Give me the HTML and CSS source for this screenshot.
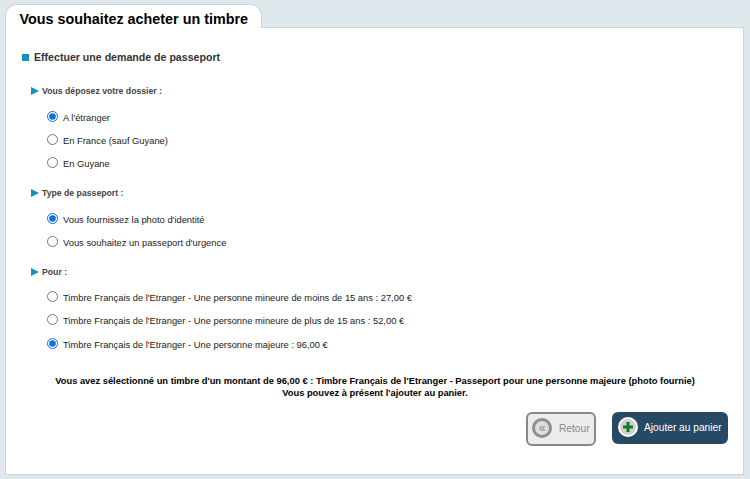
FILE: index.html
```html
<!DOCTYPE html>
<html lang="fr">
<head>
    <meta charset="UTF-8">
    <meta name="viewport" content="width=device-width, initial-scale=1.0">
    <title>Vous souhaitez acheter un timbre</title>
    <link rel="stylesheet" href="styles.css">
</head>
<body>
    <div class="tab">Vous souhaitez acheter un timbre</div>
    <div class="panel">
        <h2 class="section-title"><span class="square"></span>Effectuer une demande de passeport</h2>

        <form>
            <h3 class="group-title"><span class="arrow"></span>Vous déposez votre dossier :</h3>
            <div class="options">
                <label class="option"><input type="radio" name="depot" checked>A l'étranger</label>
                <label class="option"><input type="radio" name="depot">En France (sauf Guyane)</label>
                <label class="option"><input type="radio" name="depot">En Guyane</label>
            </div>

            <h3 class="group-title"><span class="arrow"></span>Type de passeport :</h3>
            <div class="options">
                <label class="option"><input type="radio" name="type" checked>Vous fournissez la photo d'identité</label>
                <label class="option"><input type="radio" name="type">Vous souhaitez un passeport d'urgence</label>
            </div>

            <h3 class="group-title"><span class="arrow"></span>Pour :</h3>
            <div class="options">
                <label class="option"><input type="radio" name="pour">Timbre Français de l'Etranger - Une personne mineure de moins de 15 ans : 27,00 €</label>
                <label class="option"><input type="radio" name="pour">Timbre Français de l'Etranger - Une personne mineure de plus de 15 ans : 52,00 €</label>
                <label class="option"><input type="radio" name="pour" checked>Timbre Français de l'Etranger - Une personne majeure : 96,00 €</label>
            </div>
        </form>

        <p class="summary">Vous avez sélectionné un timbre d'un montant de 96,00 € : Timbre Français de l'Etranger - Passeport pour une personne majeure (photo fournie)<br>Vous pouvez à présent l'ajouter au panier.</p>

        <div class="actions">
            <a class="btn btn-back" href="#"><span class="btn-icon">«</span>Retour</a>
            <a class="btn btn-add" href="#">
                <span class="btn-icon">
                    <svg width="10" height="10" viewBox="0 0 10 10"><path d="M3.5 0h3v3.5H10v3H6.500V10h-3V6.500H0v-3h3.500z" fill="#0f7a1c"/></svg>
                </span>Ajouter au panier</a>
        </div>
    </div>
</body>
</html>
```

FILE: styles.css
```css
* {
    margin: 0;
    padding: 0;
    box-sizing: border-box;
}

body {
    background: #dfe8ed;
    font-family: 'Liberation Sans', Arial, sans-serif;
    color: #000;
    padding: 4px 6px 0 5px;
    height: 479px;
    overflow: hidden;
}

.tab {
    width: 257px;
    height: 24px;
    margin-bottom: -1px;
    position: relative;
    background: #fff;
    border: 1px solid #ccd4d8;
    border-bottom: none;
    border-radius: 12px 12px 0 0;
    padding: 6px 0 0 13.5px;
    font-size: 14.35px;
    line-height: 16px;
    font-weight: bold;
}

.panel {
    height: 448px;
    background: #fff;
    border: 1px solid #ccd4d8;
    padding: 22px 15px 0 16px;
}

.section-title {
    display: flex;
    align-items: center;
    font-size: 10.6px;
    line-height: 14px;
    font-weight: bold;
    color: #333;
    margin-bottom: 21px;
}

.square {
    width: 7px;
    height: 7px;
    background: #1490bd;
    margin-right: 5px;
}

.group-title {
    display: flex;
    align-items: center;
    font-size: 8.7px;
    line-height: 12px;
    font-weight: bold;
    color: #444;
    margin-left: 9px;
}

.arrow {
    width: 0;
    height: 0;
    border-left: 8px solid #1490bd;
    border-top: 4.5px solid transparent;
    border-bottom: 4.5px solid transparent;
    margin-right: 3px;
}

.options {
    margin: 8.9px 0 10.9px 25px;
}

.option {
    display: flex;
    align-items: center;
    height: 23.4px;
    font-size: 9.35px;
    color: #222;
}

.option input {
    width: 11px;
    height: 11px;
    margin: 0 5px 3px 0;
    accent-color: #0f6fe0;
}

.summary {
    margin-top: 18.6px;
    font-size: 9.33px;
    line-height: 12px;
    font-weight: bold;
    text-align: center;
}

.actions {
    display: flex;
    justify-content: flex-end;
    gap: 16px;
    margin-top: 13px;
}

.btn {
    display: flex;
    align-items: center;
    border-radius: 6px;
    text-decoration: none;
    padding-bottom: 2px;
}

.btn-icon {
    display: flex;
    align-items: center;
    justify-content: center;
    border-radius: 50%;
}

.btn-back {
    width: 70px;
    height: 34px;
    border: 2px solid #888;
    background: #ececec;
    color: #888;
    font-size: 10.2px;
    padding-left: 4px;
}

.btn-back .btn-icon {
    width: 20px;
    height: 20px;
    border: 3px solid #8f8f8f;
    background: #ddd;
    color: #888;
    font-size: 12px;
    margin-right: 7px;
}

.btn-add {
    width: 116px;
    height: 32px;
    background: #264a66;
    color: #fff;
    font-size: 10.2px;
    padding-left: 6px;
}

.btn-add .btn-icon {
    width: 20px;
    height: 20px;
    background: #d0d0d0;
    border: 2px solid #fff;
    margin-right: 6px;
}
```
